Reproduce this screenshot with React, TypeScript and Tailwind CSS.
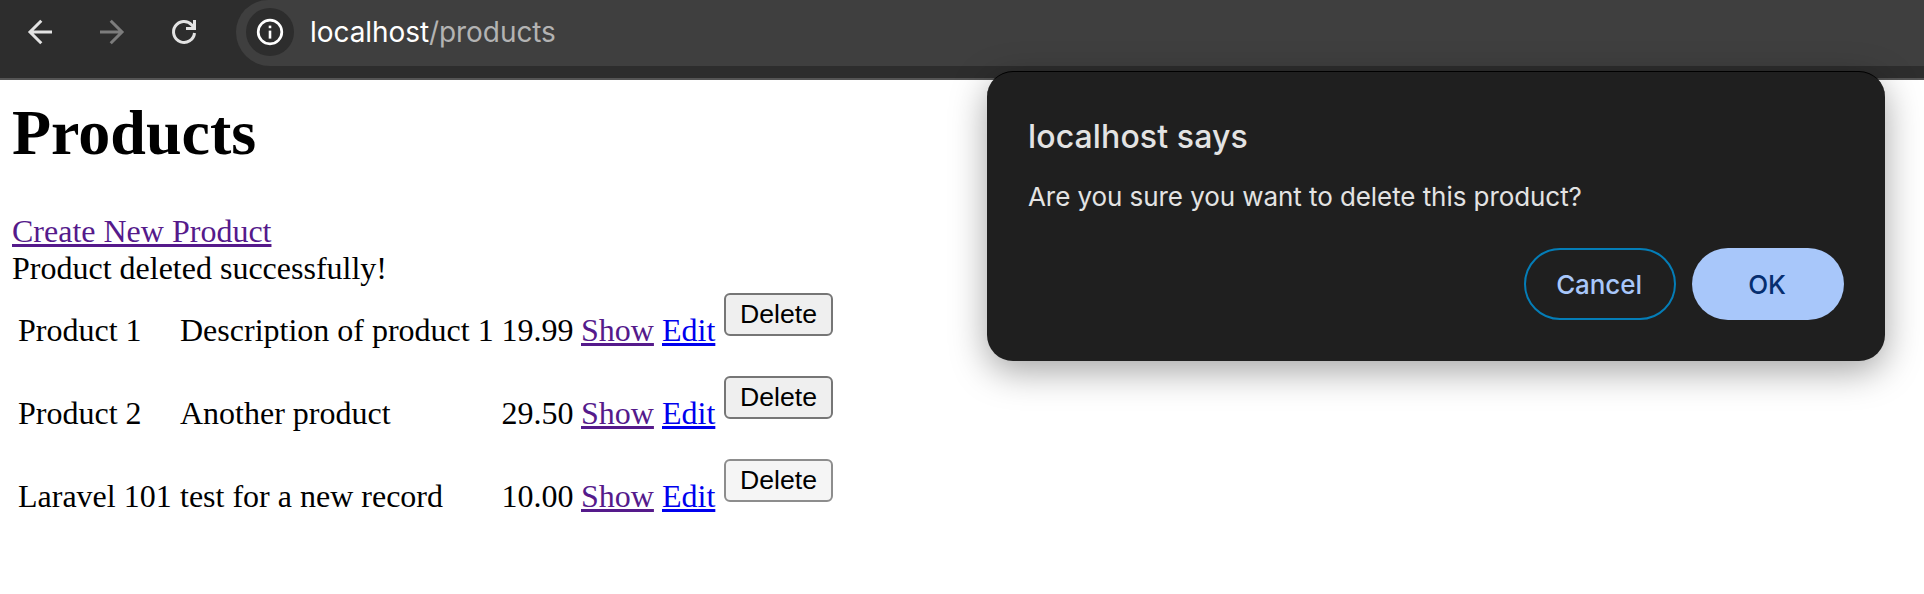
const products = [
  { name: 'Product 1', description: 'Description of product 1', price: '19.99', hovered: false },
  { name: 'Product 2', description: 'Another product', price: '29.50', hovered: false },
  { name: 'Laravel 101', description: 'test for a new record', price: '10.00', hovered: true },
];

const link = 'underline decoration-[3px] underline-offset-[2px] [text-decoration-skip-ink:none]';

function Toolbar() {
  return (
    <header className="flex h-20 w-full items-start border-b-2 border-[#555555] bg-[#2d2d2d] font-[Inter,sans-serif]">
      <div className="flex h-16 w-[236px] shrink-0 items-center pl-6">
        <svg className="size-8 shrink-0" viewBox="0 0 32 32" fill="none" stroke="#e3e3e3" strokeWidth="3">
          <path d="M28 16H6M17.3 4.8 6 16l11.3 11.2" />
        </svg>
        <svg className="ml-10 size-8 shrink-0" viewBox="0 0 32 32" fill="none" stroke="#7c7c7c" strokeWidth="3">
          <path d="M4 16h22M14.7 4.8 26 16 14.7 27.2" />
        </svg>
        <svg className="ml-10 size-8 shrink-0" viewBox="0 0 32 32" fill="none" stroke="#e3e3e3" strokeWidth="3">
          <path d="M26.5 17A10.5 10.5 0 1 1 23.8 8.9L26.5 12" />
          <path d="M26.5 4v8.5H18" />
        </svg>
      </div>
      <div className="flex h-[66px] flex-1 items-start rounded-tl-[32px] rounded-bl-[34px] bg-[#3f3f3f] pt-2 pl-[10px]">
        <div className="flex size-12 items-center justify-center rounded-full bg-[#2d2d2d]">
          <svg className="size-7" viewBox="0 0 28 28" fill="none" stroke="#ffffff">
            <circle cx="14" cy="14" r="11.8" strokeWidth="2.7" />
            <path d="M14 12.6v8" strokeWidth="2.6" />
            <path d="M14 7.6v2.6" strokeWidth="2.6" />
          </svg>
        </div>
        <div className="ml-4 text-[28px] leading-12 tracking-[-0.07px] whitespace-nowrap text-[#b3b3b3]">
          <span className="text-white">localhost</span>/products
        </div>
      </div>
    </header>
  );
}

function ConfirmDialog() {
  return (
    <div
      role="dialog"
      className="absolute top-[71px] left-[987px] flex h-[290px] w-[898px] flex-col rounded-[26px] border-t border-black bg-[#1f1f1f] pr-[41px] pl-[41px] font-[Inter,sans-serif] shadow-[0_10px_36px_rgba(0,0,0,0.36)]"
    >
      <h2 className="mt-[45px] text-[32px] leading-10 font-medium tracking-[0.12px] text-[#e3e3e3]">localhost says</h2>
      <p className="mt-6 text-[26px] leading-8 tracking-[-0.07px] text-[#e3e3e3]">
        Are you sure you want to delete this product?
      </p>
      <div className="mt-[35px] flex justify-end gap-4">
        <button className="h-[72px] w-[152px] rounded-full border-2 border-[#047db7] pr-[2px] text-[26px] font-medium tracking-[-0.1px] text-[#a8c7fa]">
          Cancel
        </button>
        <button className="h-[72px] w-[152px] rounded-full bg-[#a8c7fa] pr-[2px] text-[26px] font-medium tracking-[-0.2px] text-[#062e6f]">
          OK
        </button>
      </div>
    </div>
  );
}

export default function App() {
  return (
    <div className="relative h-[594px] w-full overflow-hidden bg-white">
      <Toolbar />
      <main className="pl-3 font-['Liberation_Serif',serif] text-[32px] leading-[37px] text-black">
        <h1 className="pt-4 text-[64px] leading-[74px] font-bold">Products</h1>
        <div className="mt-[43px]">
          <a href="#create" className={`${link} text-[#551a8b]`}>Create New Product</a>
        </div>
        <p>Product deleted successfully!</p>
        <div className="mt-[6px] pl-[6px]">
          {products.map((p) => (
            <div key={p.name} className="grid h-[83px] grid-cols-[162px_321.5px_79.5px_81px_62px_109px] whitespace-nowrap">
              <span className="pt-[19px]">{p.name}</span>
              <span className="pt-[19px]">{p.description}</span>
              <span className="pt-[19px]">{p.price}</span>
              <span className="pt-[19px]">
                <a href="#show" className={`${link} text-[#551a8b]`}>Show</a>
              </span>
              <span className="pt-[19px]">
                <a href="#edit" className={`${link} text-[#0000ee]`}>Edit</a>
              </span>
              <button
                className={`h-[43px] rounded-[6px] border-2 pb-px font-['Liberation_Sans',sans-serif] text-[26.67px] leading-9 ${
                  p.hovered ? 'border-[#8d8d8d] bg-[#f5f5f5]' : 'border-[#767676] bg-[#efefef]'
                }`}
              >
                Delete
              </button>
            </div>
          ))}
        </div>
      </main>
      <ConfirmDialog />
    </div>
  );
}
